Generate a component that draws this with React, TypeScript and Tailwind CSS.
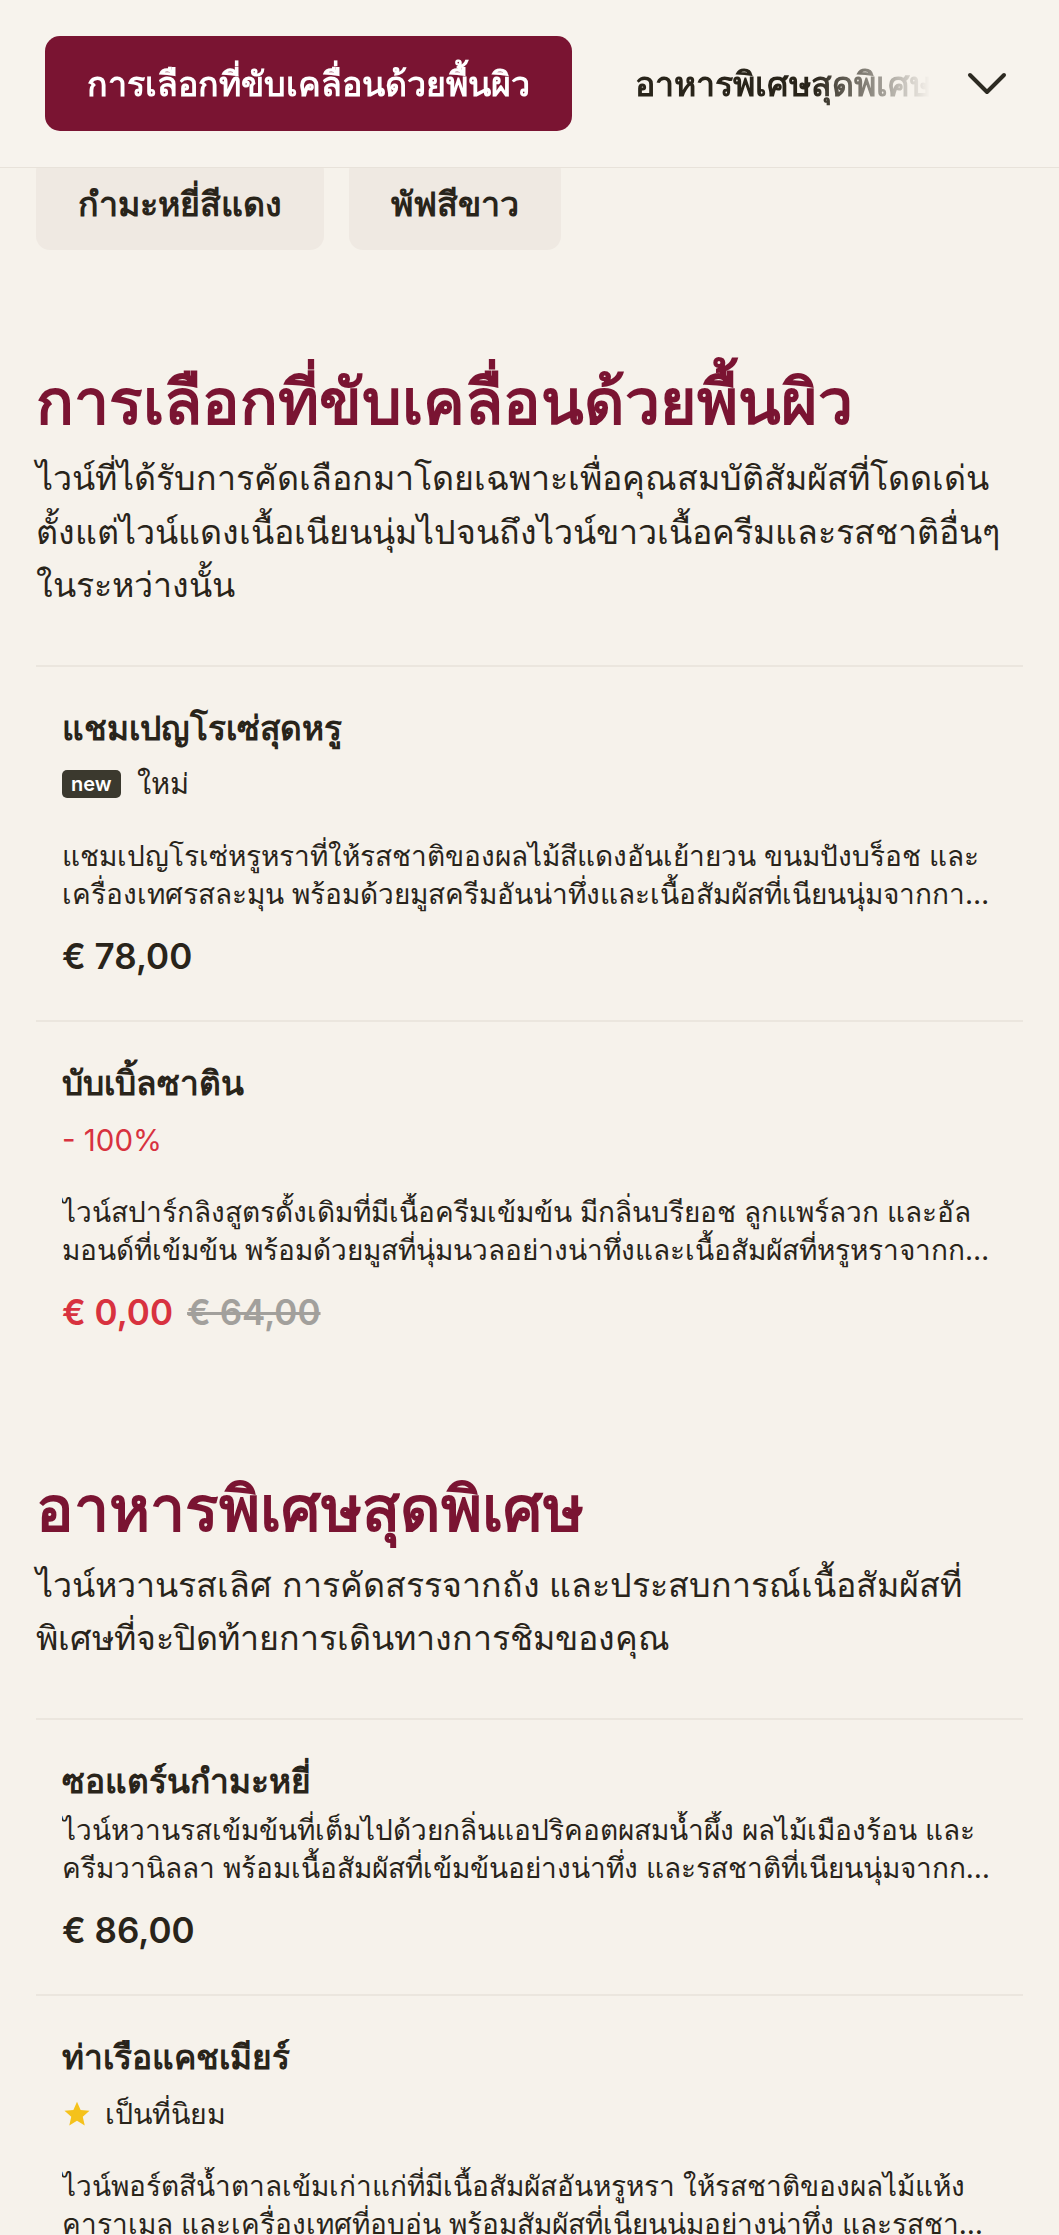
import React from "react";

type Item = {
  title: string;
  tag?: "new" | "discount" | "popular";
  desc: string;
  price: string;
  oldPrice?: string;
};

const sections: { title: string; desc: string; items: Item[] }[] = [
  {
    title: "การเลือกที่ขับเคลื่อนด้วยพื้นผิว",
    desc: "ไวน์ที่ได้รับการคัดเลือกมาโดยเฉพาะเพื่อคุณสมบัติสัมผัสที่โดดเด่น ตั้งแต่ไวน์แดงเนื้อเนียนนุ่มไปจนถึงไวน์ขาวเนื้อครีมและรสชาติอื่นๆ ในระหว่างนั้น",
    items: [
      {
        title: "แชมเปญโรเซ่สุดหรู",
        tag: "new",
        desc: "แชมเปญโรเซ่หรูหราที่ให้รสชาติของผลไม้สีแดงอันเย้ายวน ขนมปังบร็อช และเครื่องเทศรสละมุน พร้อมด้วยมูสครีมอันน่าทึ่งและเนื้อสัมผัสที่เนียนนุ่มจากการบ่มอย่างพิถีพิถัน",
        price: "€ 78,00",
      },
      {
        title: "บับเบิ้ลซาติน",
        tag: "discount",
        desc: "ไวน์สปาร์กลิงสูตรดั้งเดิมที่มีเนื้อครีมเข้มข้น มีกลิ่นบรียอช ลูกแพร์ลวก และอัลมอนด์ที่เข้มข้น พร้อมด้วยมูสที่นุ่มนวลอย่างน่าทึ่งและเนื้อสัมผัสที่หรูหราจากการบ่มอย่างยาวนาน",
        price: "€ 0,00",
        oldPrice: "€ 64,00",
      },
    ],
  },
  {
    title: "อาหารพิเศษสุดพิเศษ",
    desc: "ไวน์หวานรสเลิศ การคัดสรรจากถัง และประสบการณ์เนื้อสัมผัสที่พิเศษที่จะปิดท้ายการเดินทางการชิมของคุณ",
    items: [
      {
        title: "ซอแตร์นกำมะหยี่",
        desc: "ไวน์หวานรสเข้มข้นที่เต็มไปด้วยกลิ่นแอปริคอตผสมน้ำผึ้ง ผลไม้เมืองร้อน และครีมวานิลลา พร้อมเนื้อสัมผัสที่เข้มข้นอย่างน่าทึ่ง และรสชาติที่เนียนนุ่มจากการบ่มในถังโอ๊ก",
        price: "€ 86,00",
      },
      {
        title: "ท่าเรือแคชเมียร์",
        tag: "popular",
        desc: "ไวน์พอร์ตสีน้ำตาลเข้มเก่าแก่ที่มีเนื้อสัมผัสอันหรูหรา ให้รสชาติของผลไม้แห้ง คาราเมล และเครื่องเทศที่อบอุ่น พร้อมสัมผัสที่เนียนนุ่มอย่างน่าทึ่ง และรสชาติที่ยาวนาน",
        price: "€ 92,00",
      },
    ],
  },
];

function Tag({ tag }: { tag: Item["tag"] }) {
  if (tag === "new") {
    return (
      <div className="mt-[16px] flex h-[36px] items-center gap-[16px]">
        <span className="flex h-[28px] items-center rounded-[5px] bg-[#3b392e] px-[9px] text-[20px] font-semibold leading-none text-white">
          new
        </span>
        <span className="text-[29px] leading-[36px]">ใหม่</span>
      </div>
    );
  }
  if (tag === "discount") {
    return (
      <div className="mt-[17px] flex h-[36px] items-center">
        <span className="text-[29.5px] leading-[36px] text-[#d8323f]">- 100%</span>
      </div>
    );
  }
  if (tag === "popular") {
    return (
      <div className="mt-[17px] flex h-[36px] items-center gap-[13px]">
        <svg width="30" height="30" viewBox="0 0 24 24" className="shrink-0">
          <path
            d="M12 2.2l2.9 6.6 7.1.6-5.4 4.7 1.6 7-6.2-3.7-6.2 3.7 1.6-7L2 9.4l7.1-.6z"
            fill="#f5c21b"
          />
        </svg>
        <span className="text-[28.5px] leading-[36px]">เป็นที่นิยม</span>
      </div>
    );
  }
  return null;
}

function MenuItem({ item }: { item: Item }) {
  return (
    <li className="border-t-2 border-[#ebe6de] px-[26px] pt-[40px] pb-[41px]">
      <h3 className="text-[33.5px] font-bold leading-[43px]">{item.title}</h3>
      <Tag tag={item.tag} />
      <p
        className={`${item.tag ? "mt-[35px]" : "mt-[8px]"} line-clamp-2 text-[28px] leading-[38px]`}
      >
        {item.desc}
      </p>
      <div className="mt-[20px] flex items-baseline gap-[14px] text-[35px] font-semibold leading-[46px]">
        <span className={item.oldPrice ? "text-[#d8323f]" : ""}>{item.price}</span>
        {item.oldPrice && (
          <span className="text-[#a2a09c] line-through">{item.oldPrice}</span>
        )}
      </div>
    </li>
  );
}

export default function App() {
  return (
    <div className="min-h-screen bg-[#f6f2eb] font-['Inter','Noto_Sans',sans-serif] text-[#29241a]">
      <header className="relative z-10 flex items-center border-b border-[#e8e2da] bg-[#f7f3ed] pt-[36px] pb-[36px] pl-[45px] pr-[52px]">
        <nav className="flex min-w-0 flex-1 gap-[21px] overflow-hidden [mask-image:linear-gradient(to_right,black_86%,transparent_99%)]">
          <button className="shrink-0 rounded-[15px] bg-[#7a1432] px-[42px] py-[26px] text-[34px] font-bold leading-[43px] text-white">
            การเลือกที่ขับเคลื่อนด้วยพื้นผิว
          </button>
          <button className="shrink-0 px-[42px] py-[26px] text-[34px] font-bold leading-[43px] text-[#29241a]">
            อาหารพิเศษสุดพิเศษ
          </button>
        </nav>
        <div className="ml-[28px] flex h-[40px] w-[40px] shrink-0 items-center justify-center">
          <svg width="40" height="24" viewBox="0 0 40 24" fill="none">
            <path
              d="M3 3l17 17L37 3"
              stroke="#2d2a22"
              strokeWidth="4"
              strokeLinecap="round"
              strokeLinejoin="round"
            />
          </svg>
        </div>
      </header>

      <div className="-mt-[11px] flex gap-[25px] px-[36px]">
        <button className="rounded-[14px] bg-[#efe9e2] px-[42px] py-[25px] text-[34px] font-bold leading-[43px]">
          กำมะหยี่สีแดง
        </button>
        <button className="rounded-[14px] bg-[#efe9e2] px-[42px] py-[25px] text-[34px] font-bold leading-[43px]">
          พัฟสีขาว
        </button>
      </div>

      {sections.map((s, i) => (
        <section key={s.title} className={`${i === 0 ? "pt-[121px]" : "pt-[102px]"} px-[36px]`}>
          <h2 className="text-[62.5px] font-bold leading-[61px] text-[#7a1432]">{s.title}</h2>
          <p className="mt-[19px] text-[34px] leading-[53.5px]">{s.desc}</p>
          <ul className="mt-[53px]">
            {s.items.map((it) => (
              <MenuItem key={it.title} item={it} />
            ))}
          </ul>
        </section>
      ))}
    </div>
  );
}
